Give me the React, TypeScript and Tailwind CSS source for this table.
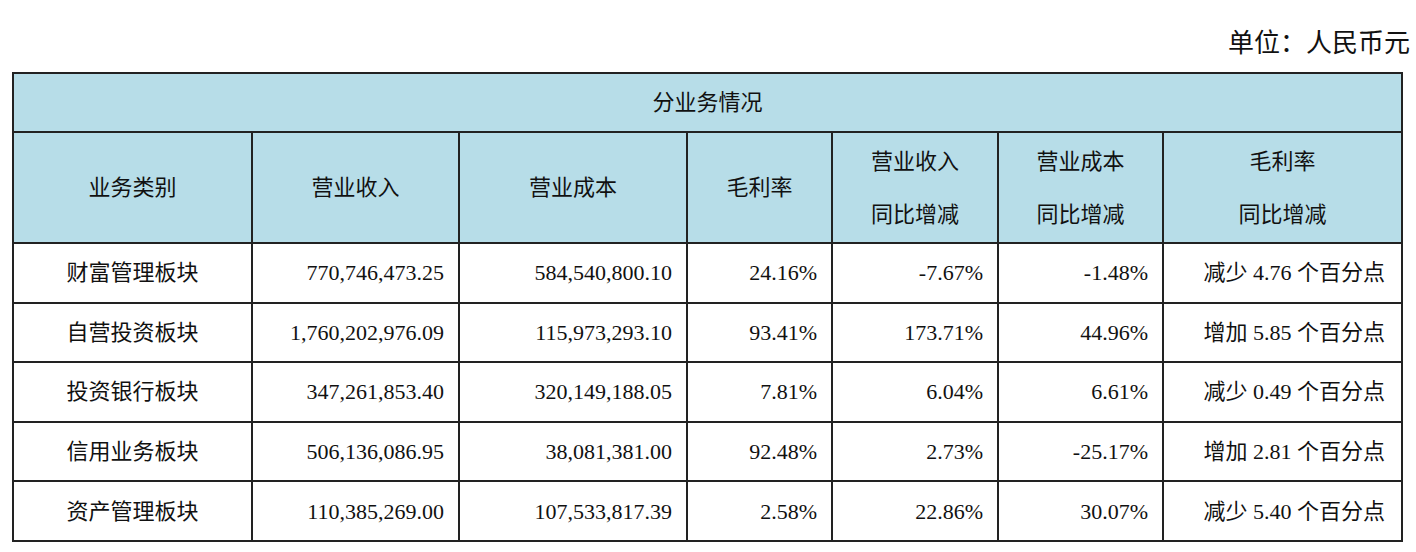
const rows = [
  ["财富管理板块", "770,746,473.25", "584,540,800.10", "24.16%", "-7.67%", "-1.48%", "减少 4.76 个百分点"],
  ["自营投资板块", "1,760,202,976.09", "115,973,293.10", "93.41%", "173.71%", "44.96%", "增加 5.85 个百分点"],
  ["投资银行板块", "347,261,853.40", "320,149,188.05", "7.81%", "6.04%", "6.61%", "减少 0.49 个百分点"],
  ["信用业务板块", "506,136,086.95", "38,081,381.00", "92.48%", "2.73%", "-25.17%", "增加 2.81 个百分点"],
  ["资产管理板块", "110,385,269.00", "107,533,817.39", "2.58%", "22.86%", "30.07%", "减少 5.40 个百分点"],
]

const widths = ["w-[239px]", "w-[207px]", "w-[228px]", "w-[145px]", "w-[166px]", "w-[165px]", "w-[239px]"]

function cellClass(i: number) {
  if (i === 0) return "border-2 border-[#222] text-center"
  if (i === 6) return "border-2 border-[#222] text-right pr-4"
  return "border-2 border-[#222] text-right pr-[14px]"
}

export default function App() {
  return (
    <div
      className="w-[1416px] h-[552px] bg-white text-[#111] overflow-hidden"
      style={{ fontFamily: '"Liberation Serif", "Noto Sans CJK SC", serif' }}
    >
      <div className="h-[72px] flex items-center justify-end pr-[6px] pt-[14px] text-[26px]">
        单位：人民币元
      </div>
      <table className="ml-[12px] w-[1391px] table-fixed border-collapse border-2 border-[#222] text-[22px]">
        <colgroup>
          {widths.map((w, i) => (
            <col key={i} className={w} />
          ))}
        </colgroup>
        <thead>
          <tr className="h-[59px] bg-[#b7dde8]">
            <th colSpan={7} className="border-2 border-[#222] font-normal text-center">
              分业务情况
            </th>
          </tr>
          <tr className="h-[111px] bg-[#b7dde8]">
            <th className="border-2 border-[#222] font-normal">业务类别</th>
            <th className="border-2 border-[#222] font-normal">营业收入</th>
            <th className="border-2 border-[#222] font-normal">营业成本</th>
            <th className="border-2 border-[#222] font-normal">毛利率</th>
            <th className="border-2 border-[#222] font-normal leading-[53px]">
              营业收入
              <br />
              同比增减
            </th>
            <th className="border-2 border-[#222] font-normal leading-[53px]">
              营业成本
              <br />
              同比增减
            </th>
            <th className="border-2 border-[#222] font-normal leading-[53px]">
              毛利率
              <br />
              同比增减
            </th>
          </tr>
        </thead>
        <tbody>
          {rows.map((r) => (
            <tr key={r[0]} className="h-[59.6px]">
              {r.map((c, i) => (
                <td key={i} className={cellClass(i)}>
                  {c}
                </td>
              ))}
            </tr>
          ))}
        </tbody>
      </table>
    </div>
  )
}
